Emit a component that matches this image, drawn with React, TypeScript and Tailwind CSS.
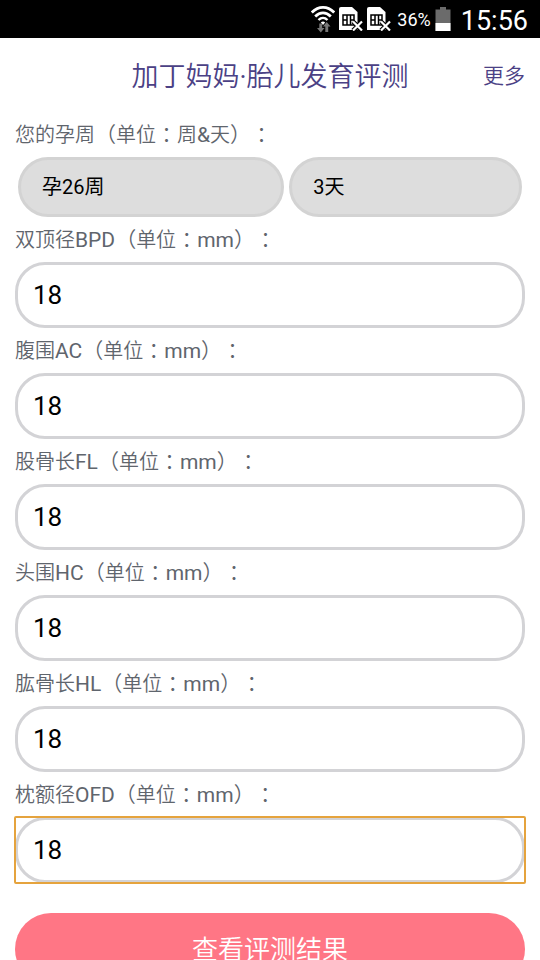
import type { ReactNode } from 'react'

const fields = [
  { id: 'bpd', name: '双顶径', code: 'BPD' },
  { id: 'ac', name: '腹围', code: 'AC' },
  { id: 'fl', name: '股骨长', code: 'FL' },
  { id: 'hc', name: '头围', code: 'HC' },
  { id: 'hl', name: '肱骨长', code: 'HL' },
  { id: 'ofd', name: '枕额径', code: 'OFD', active: true },
]

const weeks = Array.from({ length: 29 }, (_, i) => i + 12)
const days = [0, 1, 2, 3, 4, 5, 6]

function WifiIcon() {
  return (
    <svg className="w-6 h-7" viewBox="0 1 24 28" fill="none">
      <path d="M.8 8.500C7.500 1.700 16.500 1.700 23.200 8.500" stroke="white" strokeWidth="2.800" />
      <path d="M4.200 12.500C9 7.800 15 7.800 19.800 12.500" stroke="white" strokeWidth="2.800" />
      <path d="M7.500 16C10.200 13.300 13.800 13.300 16.500 16" stroke="white" strokeWidth="2.400" />
      <path d="M9.800 18.500a3.200 3.200 0 0 1 4.400 0l-2.200 2.400z" fill="white" />
      <path d="M8.300 19.500h2.900v4.500h2.300l-3.700 4.500L6 24h2.300z" fill="#777" />
      <path d="M14.300 28v-5.500H12l3.700-4.500 3.800 4.500h-2.300V28z" fill="#777" />
    </svg>
  )
}

function SimIcon() {
  return (
    <svg className="w-6 h-6" viewBox="0 0 24 24" fill="none">
      <path d="M2 0h11l5.500 5v18H0V2a2 2 0 0 1 2-2z" fill="white" />
      <path d="M4 8h11v10H4zM8 8v10M11.500 8v10M4 13h4M11.500 13h3.500" stroke="black" strokeWidth="1.500" />
      <path d="M14 14.500l9 9M23 14.500l-9 9" stroke="black" strokeWidth="4.500" />
      <path d="M14 14.500l9 9M23 14.500l-9 9" stroke="white" strokeWidth="2.200" />
    </svg>
  )
}

function BatteryIcon() {
  return (
    <svg className="w-4 h-6" viewBox="0 0 16 24">
      <path d="M5 0h6v2.500h4.500V24H.5V2.500H5z" fill="#6b6b6b" />
      <path d="M.5 16h15v8H.5z" fill="white" />
    </svg>
  )
}

function StatusBar() {
  return (
    <div className="flex h-[38px] shrink-0 items-center justify-end bg-black pr-3 text-white">
      <div className="flex items-center gap-1">
        <WifiIcon />
        <SimIcon />
        <SimIcon />
      </div>
      <span className="ml-1.5 pt-0.5 text-lg">36%</span>
      <span className="ml-1">
        <BatteryIcon />
      </span>
      <span className="ml-[10px] pt-1 text-[27px] leading-8">15:56</span>
    </div>
  )
}

// Full-width punctuation centred in its cell
function Mark({ children }: { children: string }) {
  return <span className="font-['Noto_Sans_CJK_TC',sans-serif] text-[21px]">{children}</span>
}

function Latin({ children }: { children: string }) {
  return <span className="text-[21px] font-normal">{children}</span>
}

function FieldLabel({ id, name, unit }: { id: string; name: ReactNode; unit: ReactNode }) {
  return (
    <label htmlFor={id} className="flex h-[45px] items-center text-xl font-[350] text-[#5f656d]">
      <span className="[text-spacing-trim:space-all]">
        {name}
        <Mark>（</Mark>单位<Mark>：</Mark>
        {unit}
        <Mark>）：</Mark>
      </span>
    </label>
  )
}

const selectClass =
  'h-[60px] w-full min-w-0 appearance-none rounded-full border-[3px] border-[#d3d3d3] bg-[#ddd] px-[21px] text-xl text-black'

export default function App() {
  return (
    <div className="flex h-screen flex-col overflow-hidden bg-white font-[Roboto,'Noto_Sans_CJK_SC',sans-serif]">
      <StatusBar />

      <main className="flex-1 overflow-y-auto px-[15px] [scrollbar-width:none]">
        <header className="grid h-[74px] grid-cols-[1fr_auto_1fr] items-center pt-1 font-[350] text-[#4b4185]">
          <h1 className="col-start-2 text-[27px] font-[350]">加丁妈妈<span className="font-normal">·</span>胎儿发育评测</h1>
          <a href="#more" className="justify-self-end text-[21px]">
            更多
          </a>
        </header>

        <form>
          {/* Gestational age */}
          <FieldLabel id="week" name="您的孕周" unit={<>周<Latin>&amp;</Latin>天</>} />
          <div className="flex gap-[5px] px-[3px]">
            <div className="flex-[8]">
              <select id="week" defaultValue={26} className={selectClass}>
                {weeks.map((w) => (
                  <option key={w} value={w}>{`孕${w}周`}</option>
                ))}
              </select>
            </div>
            <div className="flex-[7]">
              <select aria-label="天" defaultValue={3} className={selectClass}>
                {days.map((d) => (
                  <option key={d} value={d}>{`${d}天`}</option>
                ))}
              </select>
            </div>
          </div>

          {/* Measurements */}
          {fields.map((f) => (
            <div key={f.id}>
              <FieldLabel id={f.id} name={<>{f.name}<Latin>{f.code}</Latin></>} unit={<Latin>mm</Latin>} />
              <div className={f.active ? 'rounded-[1px] outline-2 -outline-offset-1 outline-[#e5a33d]' : ''}>
                <input
                  id={f.id}
                  type="text"
                  inputMode="numeric"
                  defaultValue="18"
                  className="block h-[66px] w-full rounded-[30px] border-[3px] border-[#d3d3d6] bg-white px-[15px] text-[26px] text-black outline-none"
                />
              </div>
            </div>
          ))}

          <button type="submit" className="mt-[30px] mb-6 h-[72px] w-full rounded-full bg-[#ff7685] pt-0.5 text-[26px] font-[350] text-white">
            查看评测结果
          </button>
        </form>
      </main>
    </div>
  )
}
